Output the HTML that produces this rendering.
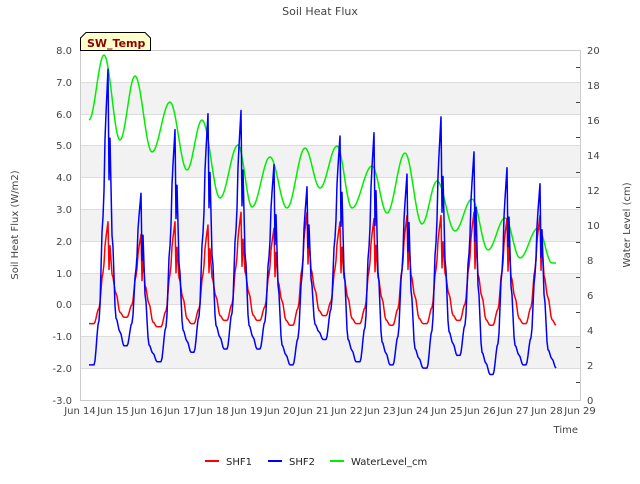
<!DOCTYPE html>
<html><head><meta charset="utf-8"><style>
body{margin:0;background:#fff;width:640px;height:480px;overflow:hidden;font-family:"DejaVu Sans","Liberation Sans",sans-serif}
svg text{font-family:"DejaVu Sans","Liberation Sans",sans-serif;fill:#444}
</style></head><body>
<svg width="640" height="480" viewBox="0 0 640 480" xmlns="http://www.w3.org/2000/svg">
<rect x="80" y="82" width="500" height="32" fill="#f2f2f2"/>
<rect x="80" y="145" width="500" height="32" fill="#f2f2f2"/>
<rect x="80" y="209" width="500" height="32" fill="#f2f2f2"/>
<rect x="80" y="273" width="500" height="32" fill="#f2f2f2"/>
<rect x="80" y="336" width="500" height="32" fill="#f2f2f2"/>
<g stroke="#dcdcdc" stroke-width="1">
<line x1="80" x2="580" y1="50.5" y2="50.5"/><line x1="80" x2="580" y1="82.5" y2="82.5"/><line x1="80" x2="580" y1="114.5" y2="114.5"/><line x1="80" x2="580" y1="145.5" y2="145.5"/><line x1="80" x2="580" y1="177.5" y2="177.5"/><line x1="80" x2="580" y1="209.5" y2="209.5"/><line x1="80" x2="580" y1="241.5" y2="241.5"/><line x1="80" x2="580" y1="273.5" y2="273.5"/><line x1="80" x2="580" y1="304.5" y2="304.5"/><line x1="80" x2="580" y1="336.5" y2="336.5"/><line x1="80" x2="580" y1="368.5" y2="368.5"/>
</g>
<rect x="80.5" y="50.5" width="500" height="350" fill="none" stroke="#ccc"/>
<g id="lines"></g>
<g font-size="10" text-anchor="end">
<text x="72" y="54">8.0</text><text x="72" y="86">7.0</text><text x="72" y="118">6.0</text><text x="72" y="149">5.0</text><text x="72" y="181">4.0</text><text x="72" y="213">3.0</text><text x="72" y="245">2.0</text><text x="72" y="277">1.0</text><text x="72" y="308">0.0</text><text x="72" y="340">-1.0</text><text x="72" y="372">-2.0</text><text x="72" y="404">-3.0</text>
</g>
<g font-size="10" text-anchor="start">
<text x="587" y="54">20</text><text x="587" y="89">18</text><text x="587" y="124">16</text><text x="587" y="159">14</text><text x="587" y="194">12</text><text x="587" y="229">10</text><text x="587" y="264">8</text><text x="587" y="299">6</text><text x="587" y="334">4</text><text x="587" y="369">2</text><text x="587" y="404">0</text>
</g>
<g stroke="#444"><line x1="580" x2="576" y1="67.5" y2="67.5"/><line x1="580" x2="576" y1="102.5" y2="102.5"/><line x1="580" x2="576" y1="137.5" y2="137.5"/><line x1="580" x2="576" y1="172.5" y2="172.5"/><line x1="580" x2="576" y1="207.5" y2="207.5"/><line x1="580" x2="576" y1="242.5" y2="242.5"/><line x1="580" x2="576" y1="277.5" y2="277.5"/><line x1="580" x2="576" y1="312.5" y2="312.5"/><line x1="580" x2="576" y1="347.5" y2="347.5"/><line x1="580" x2="576" y1="382.5" y2="382.5"/></g>
<g font-size="10" text-anchor="middle">
<text x="80" y="414">Jun 14</text><text x="113" y="414">Jun 15</text><text x="147" y="414">Jun 16</text><text x="180" y="414">Jun 17</text><text x="213" y="414">Jun 18</text><text x="247" y="414">Jun 19</text><text x="280" y="414">Jun 20</text><text x="313" y="414">Jun 21</text><text x="347" y="414">Jun 22</text><text x="380" y="414">Jun 23</text><text x="413" y="414">Jun 24</text><text x="447" y="414">Jun 25</text><text x="480" y="414">Jun 26</text><text x="513" y="414">Jun 27</text><text x="547" y="414">Jun 28</text><text x="580" y="414">Jun 29</text>
</g>
<text x="320" y="15" font-size="11" text-anchor="middle">Soil Heat Flux</text>
<text x="578" y="433" font-size="10" text-anchor="end">Time</text>
<text transform="translate(18,225) rotate(-90)" font-size="10" text-anchor="middle">Soil Heat Flux (W/m2)</text>
<text transform="translate(630,225) rotate(-90)" font-size="10" text-anchor="middle">Water Level (cm)</text>
<path d="M80.5,50.5 V38 L86,32.5 H145 L150.5,38 V50.5 Z" fill="#ffffcc" stroke="#000"/>
<text x="87" y="47" font-size="11" font-weight="bold" style="fill:#8b0000">SW_Temp</text>
<line x1="205" x2="219" y1="461" y2="461" stroke="red" stroke-width="2"/>
<text x="226" y="465" font-size="10" style="fill:#222">SHF1</text>
<line x1="268" x2="282" y1="461" y2="461" stroke="blue" stroke-width="2"/>
<text x="289" y="465" font-size="10" style="fill:#222">SHF2</text>
<line x1="330" x2="344" y1="461" y2="461" stroke="#00ee00" stroke-width="2"/>
<text x="351" y="465" font-size="10" style="fill:#222">WaterLevel_cm</text>
</svg>
<script>
var ns="http://www.w3.org/2000/svg";
var L=document.getElementById('lines');
function Y(v){return 304.5-v*31.8;}
function smooth(k){var o=[];for(var i=0;i<k.length-1;i++){var a=k[i],b=k[i+1],n=Math.max(1,Math.round(b[0]-a[0]));for(var j=0;j<n;j++){var t=j/n,c=(1-Math.cos(Math.PI*t))/2;o.push([a[0]+(b[0]-a[0])*t,a[1]+(b[1]-a[1])*c]);}}o.push(k[k.length-1]);return o;}
var peaks=[108,141,175,208,241,274,307,340,374,407,441,474,507,540];
var bp=[7.4,3.5,5.5,6.0,6.1,4.4,3.7,5.3,5.4,4.1,5.9,4.8,4.3,3.8];
var bm=[-1.9,-1.3,-1.8,-1.5,-1.4,-1.4,-1.9,-1.1,-1.8,-1.9,-2.0,-1.6,-2.2,-1.9,-2.0];
var rp=[2.6,2.2,2.6,2.5,2.9,2.4,2.9,2.6,2.7,2.8,2.8,2.9,2.7,2.8];
var rm=[-0.6,-0.4,-0.7,-0.6,-0.5,-0.5,-0.65,-0.35,-0.6,-0.65,-0.6,-0.5,-0.65,-0.6,-0.65];
function series(P,M,pk,red){var s=[[89,M[0]]];for(var i=0;i<P.length;i++){var x=pk[i],m0=M[i],m1=M[i+1],p=P[i];
s.push([x-14,m0],[x-9,m0+0.15*(p-m0)],[x-5,m0+0.5*(p-m0)],[x-2,m0+0.85*(p-m0)],[x,p],[x+1,m1+(red?0.5:0.6)*(p-m1)],[x+2,m1+0.75*(p-m1)],[x+4,m1+(red?0.45:0.4)*(p-m1)],[x+8,m1+(red?0.25:0.1)*(p-m1)],[x+12,m1+0.05*(p-m1)],[x+16,m1]);}
s.push([556,M[M.length-1]]);return smooth(s);}
function poly(pts,col,yf){var p=document.createElementNS(ns,'polyline');p.setAttribute('points',pts.map(function(a){return a[0].toFixed(1)+','+yf(a[1]).toFixed(1)}).join(' '));p.setAttribute('fill','none');p.setAttribute('stroke',col);p.setAttribute('stroke-width','1.5');p.setAttribute('stroke-linejoin','round');L.appendChild(p);}
var g=[[89,120],[104,55],[120,140],[135,76],[152,152],[170,102],[187,170],[202,120],[220,198],[238,145],[252,207],[270,157],[287,208],[305,148],[320,188],[337,146],[352,208],[372,166],[387,213],[405,153],[422,224],[437,181],[455,231],[472,199],[488,250],[505,218],[520,258],[538,228],[552,263],[556,263]];
poly(smooth(g),'#00ee00',function(v){return v;});
poly(series(rp,rm,peaks,true),'red',Y);
poly(series(bp,bm,peaks,false),'blue',Y);
</script>
</body></html>
